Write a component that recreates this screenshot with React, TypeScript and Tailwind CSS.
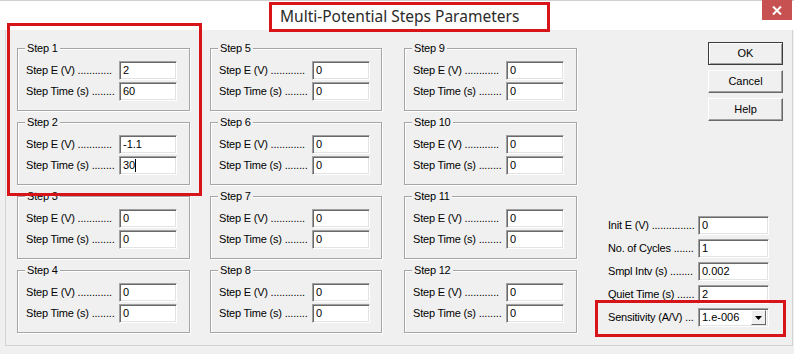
import React from "react";

const RED = "border-[#d7141a]";

const fieldCls =
  "bg-white h-[19px] border border-t-[#a0a0a0] border-l-[#a0a0a0] border-b-white border-r-white shadow-[inset_1px_1px_0_#696969,inset_-1px_-1px_0_#e3e3e3] pl-[3px] flex items-center text-[11px] text-black";

type StepProps = { n: number; e?: string; t?: string; caret?: boolean };

const StepGroup: React.FC<StepProps> = ({ n, e = "0", t = "0", caret }) => (
  <div className="h-[63px] border border-[#a5a5a5] shadow-[inset_1px_1px_0_#fff,1px_1px_0_#fff] flex flex-col">
    <div className="-mt-[8px] ml-[7px] px-[2px] w-fit bg-[#f0f0f0] leading-[14px] text-[11px] tracking-[-0.2px]">
      Step {n}
    </div>
    <div className="mt-[6px] flex flex-col gap-[2px] pl-[8px]">
      <div className="flex items-center">
        <span className="w-[93px] whitespace-nowrap overflow-hidden text-[11px] tracking-[-0.2px]">
          Step E (V) ............
        </span>
        <div className={`${fieldCls} w-[58px]`}>{e}</div>
      </div>
      <div className="flex items-center">
        <span className="w-[93px] whitespace-nowrap overflow-hidden text-[11px] tracking-[-0.2px]">
          Step Time (s) ........
        </span>
        <div className={`${fieldCls} w-[58px]`}>
          {t}
          {caret && <span className="inline-block w-px h-[13px] bg-black" />}
        </div>
      </div>
    </div>
  </div>
);

const Btn: React.FC<{ label: string; def?: boolean }> = ({ label, def }) => (
  <div
    className={`w-[75px] h-[23px] flex items-center justify-center text-[11px] bg-[#f0f0f0] border ${
      def
        ? "border-[#3c3c3c] shadow-[inset_1px_1px_0_#fff,inset_-1px_-1px_0_#a0a0a0]"
        : "border-t-white border-l-white border-b-[#696969] border-r-[#696969] shadow-[inset_-1px_-1px_0_#a0a0a0]"
    }`}
  >
    {label}
  </div>
);

const Param: React.FC<{ label: string; value: string }> = ({ label, value }) => (
  <div className="flex items-center">
    <span className="w-[90px] whitespace-nowrap overflow-hidden text-[11px] tracking-[-0.2px]">
      {label}
    </span>
    <div className={`${fieldCls} w-[71px]`}>{value}</div>
  </div>
);

export default function App() {
  return (
    <div className="relative w-[794px] h-[354px] overflow-hidden bg-[#f0f0f0] text-black font-['Liberation_Sans',Arial,sans-serif]">
      {/* Title bar */}
      <div className="h-[30px] bg-white border-t border-[#d0d0d0] flex items-start">
        <div className={`relative z-10 ml-[269px] mt-[1px] w-[281px] h-[30px] border-[3px] ${RED} flex items-center pl-[8px] pb-[1px] font-['Noto_Sans',sans-serif] text-[15.5px] text-[#2b2b2b]`}>
          Multi-Potential Steps Parameters
        </div>
        <div className="ml-auto mr-[2px] -mt-px w-[30px] h-[20px] bg-[#c75050] flex items-center justify-center">
          <svg width="10" height="9" viewBox="0 0 10 9">
            <path d="M1 0.5 L9 8.5 M9 0.5 L1 8.5" stroke="#fff" strokeWidth="2" />
          </svg>
        </div>
      </div>

      {/* Body */}
      <div className="ml-[5px] w-[788px] h-[316px] border-x border-b border-[#d4d4d4] flex pl-[11px] pt-[18px]">
        <div className="w-[173px] flex flex-col gap-[11px]">
          <StepGroup n={1} e="2" t="60" />
          <StepGroup n={2} e="-1.1" t="30" caret />
          <StepGroup n={3} />
          <StepGroup n={4} />
        </div>
        <div className="ml-[20px] w-[172px] flex flex-col gap-[11px]">
          <StepGroup n={5} />
          <StepGroup n={6} />
          <StepGroup n={7} />
          <StepGroup n={8} />
        </div>
        <div className="ml-[22px] w-[173px] flex flex-col gap-[11px]">
          <StepGroup n={9} />
          <StepGroup n={10} />
          <StepGroup n={11} />
          <StepGroup n={12} />
        </div>

        <div className="flex-1 flex flex-col -mt-[6px]">
          <div className="self-end mr-[9px] flex flex-col gap-[5px]">
            <Btn label="OK" def />
            <Btn label="Cancel" />
            <Btn label="Help" />
          </div>
          <div className="mt-[95px] pl-[31px] flex flex-col gap-[4px]">
            <Param label="Init E (V) ..............." value="0" />
            <Param label="No. of Cycles ......." value="1" />
            <Param label="Smpl Intv (s) ........" value="0.002" />
            <Param label="Quiet Time (s) ......" value="2" />
            <div className="flex items-center">
              <span className="w-[90px] whitespace-nowrap overflow-hidden text-[11px] tracking-[-0.2px]">
                Sensitivity (A/V) ...
              </span>
              <div className={`${fieldCls} w-[71px] justify-between pr-[2px]`}>
                <span>1.e-006</span>
                <div className="w-[15px] h-[15px] bg-[#f0f0f0] border border-t-white border-l-white border-b-[#696969] border-r-[#696969] flex items-center justify-center">
                  <svg width="7" height="4" viewBox="0 0 7 4">
                    <path d="M0 0 H7 L3.5 4 Z" fill="#000" />
                  </svg>
                </div>
              </div>
            </div>
          </div>
        </div>
      </div>

      {/* Annotation boxes */}
      <div className={`absolute left-[7px] top-[23px] w-[195px] h-[173px] border-[3px] ${RED}`} />
      <div className={`absolute left-[595px] top-[300px] w-[191px] h-[37px] border-[3px] ${RED}`} />
    </div>
  );
}
